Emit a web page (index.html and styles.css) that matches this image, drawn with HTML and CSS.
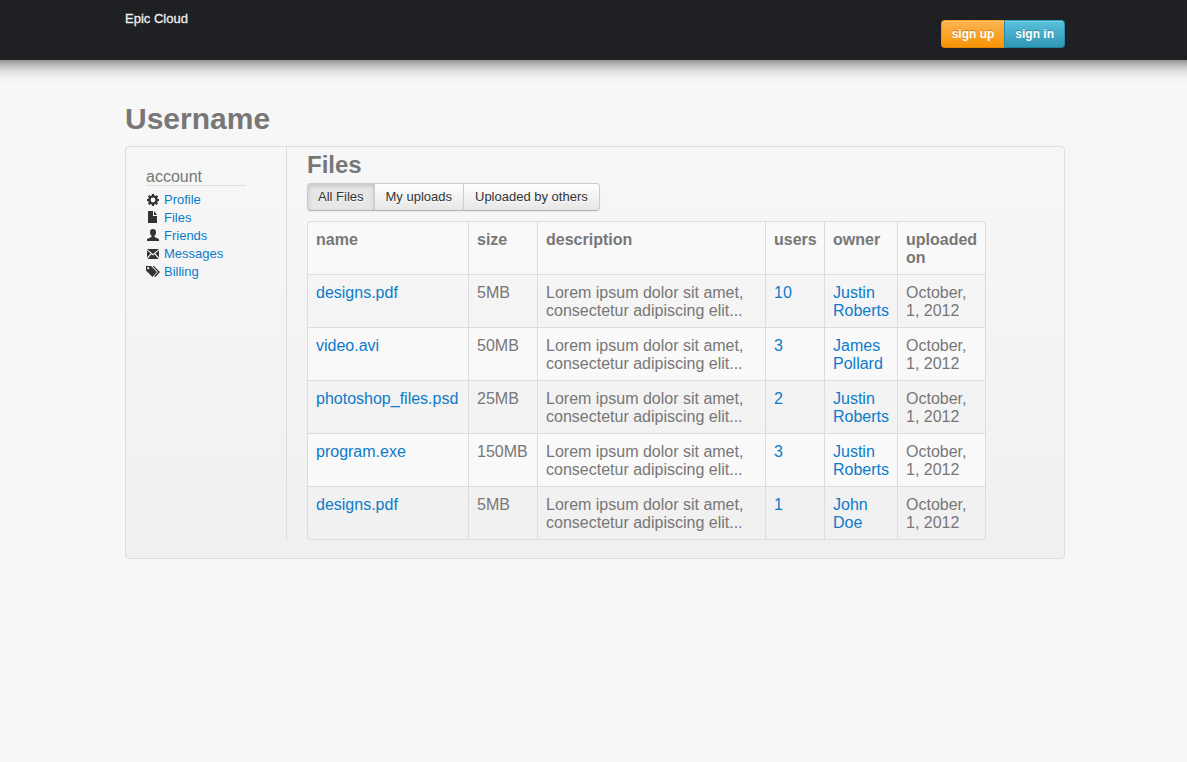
FILE: index.html
```html
<!DOCTYPE html>
<html lang="en">
<head>
<meta charset="utf-8">
<title>Epic Cloud</title>
<link rel="stylesheet" href="styles.css">
</head>
<body>
<header class="topbar">
  <div class="container topbar-inner">
    <a class="brand" href="#">Epic Cloud</a>
    <div class="auth">
      <button class="btn btn-warning" type="button">sign up</button>
      <button class="btn btn-info" type="button">sign in</button>
    </div>
  </div>
</header>
<main class="container">
  <h1 class="page-title">Username</h1>
  <div class="panel">
    <nav class="sidebar" aria-labelledby="account-title">
      <h2 class="sidebar-title" id="account-title">account</h2>
      <ul class="menu">
        <li><a href="#"><svg class="icon" viewBox="0 0 14 14" aria-hidden="true"><path fill-rule="evenodd" d="M6 1h2l.4 1.600 1 .4 1.400-.8 1.300 1.300-.8 1.400.4 1L13 6v2l-1.400.2-.4 1 .8 1.400-1.300 1.300-1.400-.8-1 .4L8 13H6l-.3-1.500-1-.4-1.400.8L2 10.600l.8-1.400-.4-1L1 8V6l1.400-.2.4-1L2 3.400l1.300-1.300 1.400.8 1-.4zM7 4.600A2.400 2.400 0 1 0 7 9.400 2.400 2.400 0 1 0 7 4.600z"/></svg>Profile</a></li>
        <li><a href="#"><svg class="icon" viewBox="0 0 14 14" aria-hidden="true"><path d="M2 0h5v5h4v7H2zM8 0l3 4H8z"/></svg>Files</a></li>
        <li><a href="#"><svg class="icon" viewBox="0 0 14 14" aria-hidden="true"><path d="M7 0c2 0 3 1.200 3 3.200C10 5 9.300 6 8.500 6.800v1.300c1.500.9 4.500 1.300 4.500 2.700V12H1v-1.200c0-1.400 3-1.800 4.500-2.700V6.800C4.700 6 4 5 4 3.200 4 1.200 5 0 7 0z"/></svg>Friends</a></li>
        <li><a href="#"><svg class="icon" viewBox="0 0 14 14" aria-hidden="true"><path d="M1 2h12L7 7zM1 3.200L4.700 6.500 1 10.500zM13 3.200v7.300L9.300 6.500zM5.400 7.200L7 8.500l1.600-1.300L12.500 12h-11z"/></svg>Messages</a></li>
        <li><a href="#"><svg class="icon" viewBox="0 0 14 14" aria-hidden="true"><path fill-rule="evenodd" d="M0 1h5l6 6-4.500 5L0 5.500zM2.200 2.100a1.100 1.100 0 1 0 0 2.200 1.100 1.100 0 1 0 0-2.200z"/><path d="M6.500 1H8l6 6-4.500 5-1.400-.8L12 7z"/></svg>Billing</a></li>
      </ul>
    </nav>
    <section class="content">
      <h2 class="section-title">Files</h2>
      <div class="filters">
        <button class="btn active" type="button" aria-pressed="true">All Files</button>
        <button class="btn" type="button">My uploads</button>
        <button class="btn" type="button">Uploaded by others</button>
      </div>
      <table class="files">
        <colgroup><col class="c-name"><col class="c-size"><col class="c-desc"><col class="c-users"><col class="c-owner"><col class="c-date"></colgroup>
        <thead>
          <tr><th>name</th><th>size</th><th>description</th><th>users</th><th>owner</th><th>uploaded on</th></tr>
        </thead>
        <tbody>
          <tr><td><a href="#">designs.pdf</a></td><td>5MB</td><td>Lorem ipsum dolor sit amet,<br>consectetur adipiscing elit...</td><td><a href="#">10</a></td><td><a href="#">Justin Roberts</a></td><td>October, 1, 2012</td></tr>
          <tr><td><a href="#">video.avi</a></td><td>50MB</td><td>Lorem ipsum dolor sit amet,<br>consectetur adipiscing elit...</td><td><a href="#">3</a></td><td><a href="#">James Pollard</a></td><td>October, 1, 2012</td></tr>
          <tr><td><a href="#">photoshop_files.psd</a></td><td>25MB</td><td>Lorem ipsum dolor sit amet,<br>consectetur adipiscing elit...</td><td><a href="#">2</a></td><td><a href="#">Justin Roberts</a></td><td>October, 1, 2012</td></tr>
          <tr><td><a href="#">program.exe</a></td><td>150MB</td><td>Lorem ipsum dolor sit amet,<br>consectetur adipiscing elit...</td><td><a href="#">3</a></td><td><a href="#">Justin Roberts</a></td><td>October, 1, 2012</td></tr>
          <tr><td><a href="#">designs.pdf</a></td><td>5MB</td><td>Lorem ipsum dolor sit amet,<br>consectetur adipiscing elit...</td><td><a href="#">1</a></td><td><a href="#">John<br>Doe</a></td><td>October, 1, 2012</td></tr>
        </tbody>
      </table>
    </section>
  </div>
</main>
</body>
</html>
```
FILE: styles.css
```css
* { box-sizing: border-box; }
body {
  margin: 0;
  overflow-x: hidden;
  background: #f7f7f7;
  color: #777;
  font: 13px/18px "Liberation Sans", Arial, sans-serif;
}
a { color: #0d7bc9; text-decoration: none; }
h1, h2, ul { margin: 0; padding: 0; }
.container {
  box-sizing: content-box;
  max-width: 940px;
  margin: 0 auto;
  padding-left: 3px;
}
.topbar {
  height: 60px;
  margin: 0 -20px;
  background-color: #202226;
  background-image:
    repeating-linear-gradient(0deg, rgba(0, 0, 0, .1) 0 1px, transparent 1px 3px),
    repeating-linear-gradient(90deg, rgba(0, 0, 0, .1) 0 1px, transparent 1px 3px);
  box-shadow: 0 0 20px rgba(0, 0, 0, .8);
}
.topbar-inner {
  display: flex;
  justify-content: space-between;
  align-items: flex-start;
}
.brand { margin-top: 10px; color: #eee; -webkit-text-stroke: .3px #eee; }
.auth { display: flex; margin-top: 20px; }
.btn {
  margin: 0 0 0 -1px;
  padding: 4px 10px;
  border: 1px solid #ccc;
  border-bottom-color: #b3b3b3;
  background: linear-gradient(#fff, #e6e6e6);
  box-shadow: inset 0 1px 0 rgba(255, 255, 255, .2), 0 1px 2px rgba(0, 0, 0, .05);
  color: #333;
  font: inherit;
  text-shadow: 0 1px 1px rgba(255, 255, 255, .75);
}
.btn:first-child { margin-left: 0; border-radius: 4px 0 0 4px; }
.btn:last-child { border-radius: 0 4px 4px 0; }
.filters .btn + .btn { padding: 4px 11px; }
.btn.active {
  background: #e6e6e6;
  box-shadow: inset 0 2px 4px rgba(0, 0, 0, .15), 0 1px 2px rgba(0, 0, 0, .05);
}
.auth .btn {
  color: #fff;
  font-size: 12px;
  font-weight: bold;
  text-shadow: 0 -1px 0 rgba(0, 0, 0, .25);
}
.auth .btn-warning { background: linear-gradient(#fbb450, #f89406); border-color: #f9a123 #f89a16 #e08607; }
.auth .btn-info { background: linear-gradient(#5bc0de, #2f96b4); border-color: #36a0be #2b8ba8 #24819c; }
.page-title {
  margin: 41px 0 9px;
  font-size: 30px;
  line-height: 36px;
}
.panel {
  display: flex;
  padding-bottom: 18px;
  border: 1px solid #ddd;
  border-radius: 4px;
  background: linear-gradient(#f7f7f7, #f0f0f0);
}
.sidebar {
  flex: 0 0 161px;
  padding: 22px 40px 0 20px;
  border-right: 1px solid #ddd;
}
.sidebar-title {
  margin-bottom: 5px;
  border-bottom: 1px solid #ddd;
  font-size: 16px;
  font-weight: normal;
  line-height: 16px;
}
.menu { list-style: none; }
.menu a { display: flex; align-items: center; gap: 4px; }
.icon { flex: none; width: 14px; height: 14px; fill: #333; }
.content { flex: 1; min-width: 0; padding: 0 20px; }
.section-title { font-size: 24px; line-height: 36px; }
.filters { display: flex; margin-bottom: 10px; }
.files {
  table-layout: fixed;
  width: 100%;
  max-width: 679px;
  border: 1px solid #ddd;
  border-left: 0;
  border-radius: 4px;
  border-spacing: 0;
  font-size: 16px;
}
.c-name { width: 161px; }
.c-size { width: 69px; }
.c-desc { width: 228px; }
.c-users { width: 59px; }
.c-owner { width: 73px; }
.files th, .files td {
  padding: 9px 7px 7px 8px;
  border-left: 1px solid #ddd;
  text-align: left;
  vertical-align: top;
}
.files td { border-top: 1px solid #ddd; }
.files thead th, .files tbody tr:nth-child(even) td { background: #f9f9f9; }
.files th:first-child { border-top-left-radius: 4px; }
.files th:last-child { border-top-right-radius: 4px; }
.files tbody tr:last-child td:first-child { border-bottom-left-radius: 4px; }
```
